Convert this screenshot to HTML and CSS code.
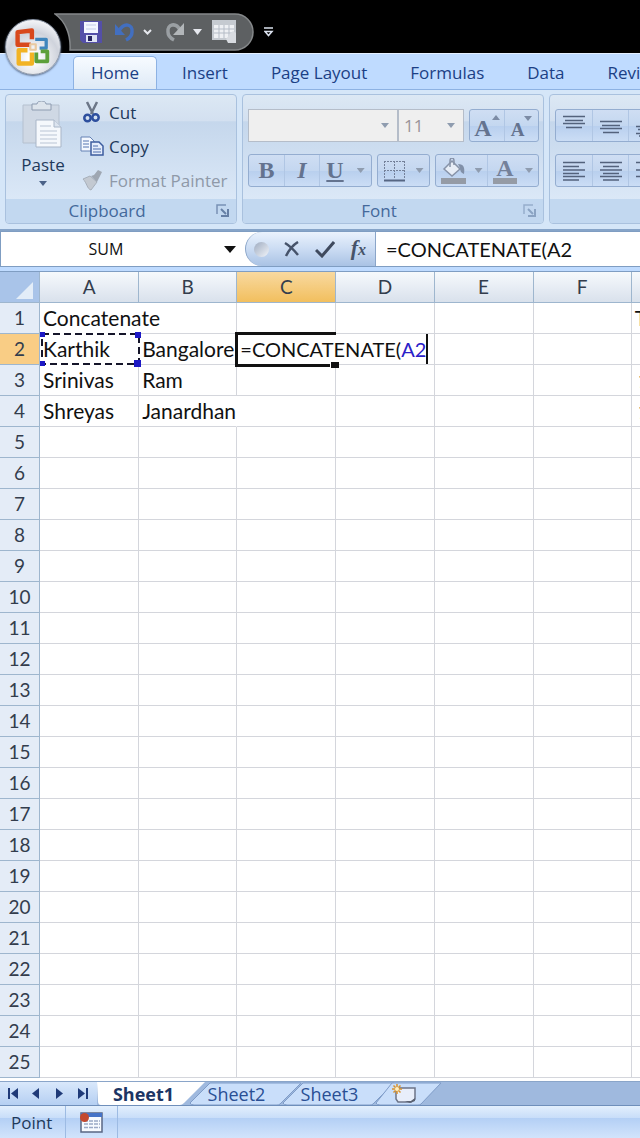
FILE: index.html
```
<!DOCTYPE html>
<html lang="en">
<head>
  <meta charset="UTF-8" />
  <meta name="viewport" content="width=device-width, initial-scale=1.0" />
  <title>Concatenate</title>
  <link rel="stylesheet" href="styles.css">
</head>
<body>
  <header class="title-bar">
    <button class="office-button" aria-label="Office Button">
      <svg width="44" height="44" viewBox="0 0 40 40" fill="none" stroke-width="4" stroke-linejoin="round">
        <path d="M18 18H6V6.500L19 5v8" stroke="#d8481c"/>
        <path d="M22 13h10v8h-6" stroke="#3f86bd" stroke-width="3"/>
        <path d="M15 23H7v12h12V25" stroke="#f2b324"/>
        <path d="M23 25v8h10v-9h-6" stroke="#5da03a" stroke-width="3.500"/>
        <path d="M17.500 17.500h5v5h-5z" stroke="#e9c9a0" stroke-width="2"/>
      </svg>
    </button>
    <div class="quick-access">
      <svg class="quick-shape" width="200" height="38" viewBox="0 0 200 38">
        <path d="M1 1H181a18 18 0 0 1 0 36H16C17 21 11 8 1 1z" fill="#5d6062" stroke="#85888a" stroke-width="1.500"/>
      </svg>
      <button aria-label="Save">
        <svg width="22" height="22" viewBox="0 0 22 22">
          <path d="M0 0h22v22H3l-3-3z" fill="#544fa8"/>
          <path d="M4 1h14v11H4z" fill="#f4f6ff"/>
          <path d="M6 4h10M6 8h10" stroke="#c4cbe8"/>
          <path d="M6 14h11v7H6z" fill="#dfe3f3"/>
          <path d="M8 15h4v5H8z" fill="#26245e"/>
        </svg>
      </button>
      <button class="undo" aria-label="Undo">
        <svg width="20" height="22" viewBox="0 0 20 22">
          <path d="M4 10C9 1 18 3 17 11c0 4-2 6-6 8" fill="none" stroke="#426fc0" stroke-width="3.500"/>
          <path d="M0 3v11h10z" fill="#426fc0"/>
        </svg>
      </button>
      <button aria-label="Undo list">
        <svg width="9" height="6" viewBox="0 0 9 6"><path d="M1 1l3.500 3.500L8 1" fill="none" stroke="#e6e8ee" stroke-width="2"/></svg>
      </button>
      <button class="redo" aria-label="Redo">
        <svg width="20" height="22" viewBox="0 0 20 22">
          <path d="M15 9C11 1 2 3 3 11c0 4 2 6 6 8" fill="none" stroke="#9a9fa3" stroke-width="3.500"/>
          <path d="M19 2v12H8z" fill="#b2b6b9"/>
        </svg>
      </button>
      <button aria-label="Redo list">
        <svg width="9" height="6" viewBox="0 0 9 6"><path d="M0 0h9L4.500 6z" fill="#e6e8ee"/></svg>
      </button>
      <button class="form-button" aria-label="Form">
        <svg width="25" height="24" viewBox="0 0 25 24">
          <path d="M0 0h24v20H0z" fill="#c5cad0"/>
          <path d="M2 5h20v13H2z" fill="#eef0f3"/>
          <path d="M2 9h20M2 13h20M7 5v13M12 5v13M17 5v13" stroke="#b5bcc6"/>
          <path d="M14 19l7-8 3 2v10h-8z" fill="#d8dbe0"/>
        </svg>
      </button>
      <button class="customize" aria-label="Customize Quick Access Toolbar">
        <svg width="10" height="10" viewBox="0 0 10 10"><path d="M0 1h9M1 4.500l3.500 4 3.500-4z" fill="none" stroke="#dce3f0" stroke-width="1.500"/></svg>
      </button>
    </div>
  </header>

  <nav class="tabs">
    <button class="tab active">Home</button>
    <button class="tab">Insert</button>
    <button class="tab">Page Layout</button>
    <button class="tab">Formulas</button>
    <button class="tab">Data</button>
    <button class="tab">Review</button>
  </nav>

  <section class="ribbon">
    <div class="group clipboard">
      <div class="group-body">
        <button class="paste">
          <svg width="42" height="48" viewBox="0 0 42 48">
            <path d="M1 4h36v38H1z" fill="#cfd8e4" stroke="#b5c0cf"/>
            <path d="M10 3h5c0-4 9-4 9 0h5v6H10z" fill="#dde4ec" stroke="#8d9bb0"/>
            <path d="M14 19h18l7 7v20H14z" fill="#f5f8fc" stroke="#a9b6c8"/>
            <path d="M32 19v7h7" fill="#dce4ef" stroke="#a9b6c8"/>
            <path d="M18 25h11M18 30h17M18 34h17M18 38h17M18 42h17" stroke="#b9c4d4"/>
          </svg>
          <span>Paste</span>
          <i class="arrow dark"></i>
        </button>
        <div class="clip-list">
          <button class="clip-item">
            <svg width="24" height="22" viewBox="0 0 24 22" fill="none">
              <path d="M7 1l6 12M17 1l-6 12" stroke="#6c7788" stroke-width="2.500"/>
              <circle cx="7.500" cy="17" r="3.200" stroke="#2d4f9e" stroke-width="2.500"/>
              <circle cx="15.500" cy="16.500" r="3.200" stroke="#2d4f9e" stroke-width="2.500"/>
            </svg>
            Cut
          </button>
          <button class="clip-item">
            <svg width="24" height="22" viewBox="0 0 24 22">
              <path d="M1 2h9l4 4v10H1z" fill="#f4f8ff" stroke="#6481b4"/>
              <path d="M3 6h6M3 9h6M3 12h6" stroke="#5474b0"/>
              <path d="M11 7h8l4 4v9H11z" fill="#e4ecfb" stroke="#3c5c9f" stroke-width="1.500"/>
              <path d="M13 11h5M13 14h8M13 17h8" stroke="#4d6dac"/>
            </svg>
            Copy
          </button>
          <button class="clip-item" disabled>
            <svg width="24" height="22" viewBox="0 0 24 22">
              <path d="M3 10l7-3 7 6-6 8C7 20 7 14 3 10z" fill="#c3c9d1" stroke="#a7afba"/>
              <path d="M11 7l3-1 4-5 4 2-3 6-2 4z" fill="#9fa7b2"/>
            </svg>
            Format Painter
          </button>
        </div>
      </div>
      <div class="group-title">
        Clipboard
        <button class="launcher" aria-label="Clipboard options">
          <svg width="13" height="13" viewBox="0 0 13 13" fill="none"><path d="M1 10V1h9" stroke="#7891b5" stroke-width="1.500"/><path d="M5 5l5 5M12 5v7H5" stroke="#6680a6" stroke-width="2"/></svg>
        </button>
      </div>
    </div>

    <div class="group font">
      <div class="group-body rows">
        <div class="tool-row">
          <div class="combos">
            <div class="combo font-name">
              <select aria-label="Font" disabled><option></option></select>
              <i class="arrow"></i>
            </div>
            <div class="combo font-size">
              <select aria-label="Font size" disabled><option>11</option></select>
              <i class="arrow"></i>
            </div>
          </div>
          <div class="tools">
            <button class="letter grow" aria-label="Grow font">A<svg width="8" height="5" viewBox="0 0 8 5"><path d="M0 5l4-5 4 5z" fill="#7c8ba5"/></svg></button>
            <button class="letter shrink" aria-label="Shrink font">A<svg width="8" height="5" viewBox="0 0 8 5"><path d="M0 0h8L4 5z" fill="#7c8ba5"/></svg></button>
          </div>
        </div>
        <div class="tool-row">
          <div class="tools">
            <button class="letter">B</button>
            <button class="letter italic">I</button>
            <button class="letter wide"><u>U</u><i class="arrow"></i></button>
          </div>
          <div class="tools">
            <button class="picker border-picker" aria-label="Borders">
              <svg width="21" height="22" viewBox="0 0 21 22" fill="none" stroke="#74819a">
                <path d="M0 1.500h21M0 10.500h21M.5 1v18M10.500 1v18M20.500 1v18" stroke-dasharray="2 1"/>
                <path d="M0 20.500h21" stroke="#566683" stroke-width="2"/>
              </svg>
              <i class="arrow"></i>
            </button>
          </div>
          <div class="tools">
            <button class="picker" aria-label="Fill color">
              <svg width="26" height="26" viewBox="0 0 26 26">
                <path d="M3 11l8-8 8 8-8 7z" fill="#e7edf6" stroke="#8793a8" stroke-width="1.500"/>
                <path d="M9 9V3c0-4 4-4 4 0v4" fill="none" stroke="#8793a8" stroke-width="1.500"/>
                <path d="M17 6c6 0 7 4 6 10-3-1-4-3-4-6z" fill="#8190a8"/>
                <path d="M0 20h25v6H0z" fill="#959ba5"/>
              </svg>
              <i class="arrow"></i>
            </button>
            <button class="picker" aria-label="Font color">
              <span class="font-color">A</span>
              <i class="arrow"></i>
            </button>
          </div>
        </div>
      </div>
      <div class="group-title">
        Font
        <button class="launcher faded" aria-label="Font options">
          <svg width="13" height="13" viewBox="0 0 13 13" fill="none"><path d="M1 10V1h9" stroke="#7891b5" stroke-width="1.500"/><path d="M5 5l5 5M12 5v7H5" stroke="#6680a6" stroke-width="2"/></svg>
        </button>
      </div>
    </div>

    <div class="group alignment">
      <div class="group-body rows">
        <div class="tool-row">
          <div class="tools">
            <button aria-label="Top align"><svg width="22" height="22" viewBox="0 0 22 22"><path d="M0 1.500h22M2 5.500h18M0 8.500h22M3 12.500h16" stroke="#53627c" stroke-width="1.500"/></svg></button>
            <button aria-label="Middle align"><svg width="22" height="22" viewBox="0 0 22 22"><path d="M0 6.500h22M2 10.500h18M0 13.500h22M3 17.500h16" stroke="#53627c" stroke-width="1.500"/></svg></button>
            <button aria-label="Bottom align"><svg width="22" height="22" viewBox="0 0 22 22"><path d="M0 11.500h22M2 14.500h18M0 18.500h22M3 21h16" stroke="#53627c" stroke-width="1.500"/></svg></button>
          </div>
        </div>
        <div class="tool-row">
          <div class="tools">
            <button aria-label="Align left"><svg width="22" height="20" viewBox="0 0 22 20"><path d="M0 1.500h22M0 5.500h16M0 9h22M0 12.500h16M0 15.500h22M0 19h16" stroke="#53627c" stroke-width="1.500"/></svg></button>
            <button aria-label="Center"><svg width="22" height="20" viewBox="0 0 22 20"><path d="M0 1.500h22M3 5.500h16M0 9h22M3 12.500h16M0 15.500h22M3 19h16" stroke="#53627c" stroke-width="1.500"/></svg></button>
            <button aria-label="Align right"><svg width="22" height="20" viewBox="0 0 22 20"><path d="M0 1.500h22M6 5.500h16M0 9h22M6 12.500h16M0 15.500h22M6 19h16" stroke="#53627c" stroke-width="1.500"/></svg></button>
          </div>
        </div>
      </div>
      <div class="group-title"></div>
    </div>
  </section>

  <div class="formula-bar">
    <div class="name-box">
      <input type="text" value="SUM" aria-label="Name box">
      <button aria-label="Show names"><svg width="12" height="7" viewBox="0 0 12 7"><path d="M0 0h12L6 7z" fill="#111"/></svg></button>
    </div>
    <div class="formula-buttons">
      <span class="knob"></span>
      <button aria-label="Cancel"><svg width="16" height="16" viewBox="0 0 16 16"><path d="M1 2c5 3 9 7 13 12M14 1C9 4 5 9 2 15" fill="none" stroke="#46536a" stroke-width="2.500"/></svg></button>
      <button aria-label="Enter"><svg width="20" height="17" viewBox="0 0 20 17"><path d="M1 9l6 6L19 1" fill="none" stroke="#3f4a5e" stroke-width="3"/></svg></button>
      <button class="fx" aria-label="Insert function">f<small>x</small></button>
    </div>
    <input class="formula" type="text" value="=CONCATENATE(A2" aria-label="Formula">
  </div>

  <main class="sheet">
    <table>
      <colgroup>
        <col class="c-head"><col class="c-wide"><col class="c-norm"><col class="c-wide"><col class="c-norm"><col class="c-wide"><col class="c-norm"><col class="c-wide">
      </colgroup>
      <thead>
        <tr>
          <th class="corner"><svg width="17" height="17" viewBox="0 0 17 17"><path d="M17 0v17H0z" fill="#e3edf8"/></svg></th>
          <th>A</th><th>B</th><th class="current">C</th><th>D</th><th>E</th><th>F</th><th></th>
        </tr>
      </thead>
      <tbody id="rows">
        <tr><th>1</th><td class="spill">Concatenate</td><td></td><td></td><td></td><td></td><td></td><td>Text</td></tr>
        <tr>
          <th class="current">2</th>
          <td class="source">Karthik
            <svg class="ants" width="101" height="36" viewBox="0 0 101 36" fill="none">
              <path d="M2 3h97v30H2z" stroke="#fff" stroke-width="3"/>
              <path d="M2 3h97v30H2z" stroke="#15152a" stroke-width="2" stroke-dasharray="7 4"/>
              <path d="M0 1h5v5H0zM95 1h6v6h-6zM0 30h5v5H0zM94 29h7v7h-7z" fill="#1c18c4"/>
            </svg>
          </td>
          <td>Bangalore</td>
          <td class="editing"><div class="editor">=CONCATENATE(<span>A2</span></div></td>
          <td></td><td></td><td></td><td></td>
        </tr>
        <tr><th>3</th><td>Srinivas</td><td>Ram</td><td></td><td></td><td></td><td></td><td class="number">1</td></tr>
        <tr><th>4</th><td>Shreyas</td><td class="spill">Janardhan</td><td></td><td></td><td></td><td></td><td class="number">1</td></tr>
      </tbody>
    </table>
  </main>

  <div class="sheet-bar">
    <div class="sheet-nav">
      <button aria-label="First sheet"><svg width="11" height="11" viewBox="0 0 11 11"><path d="M0 0h2v11H0zM10 0v11L3 5.500z" fill="#1f3a78"/></svg></button>
      <button aria-label="Previous sheet"><svg width="11" height="11" viewBox="0 0 11 11"><path d="M8 0v11L1 5.500z" fill="#1f3a78"/></svg></button>
      <button aria-label="Next sheet"><svg width="11" height="11" viewBox="0 0 11 11"><path d="M2 0v11l7-5.500z" fill="#1f3a78"/></svg></button>
      <button aria-label="Last sheet"><svg width="11" height="11" viewBox="0 0 11 11"><path d="M9 0h2v11H9zM1 0v11l7-5.500z" fill="#1f3a78"/></svg></button>
    </div>
    <button class="sheet-tab active">
      <svg width="108" height="24" viewBox="0 0 108 24"><path d="M0 0h108L87 21q-2 2-4 2H4q-3 0-3-4z" fill="#fff"/></svg>
      <span>Sheet1</span>
    </button>
    <button class="sheet-tab">
      <svg width="111" height="24" viewBox="0 0 111 24"><path d="M0 21L20 1h91L90 22q-1 1-3 1H4q-3 0-4-2z" fill="#c9defa" stroke="#7f9cc8"/></svg>
      <span>Sheet2</span>
    </button>
    <button class="sheet-tab">
      <svg width="111" height="24" viewBox="0 0 111 24"><path d="M0 21L20 1h91L90 22q-1 1-3 1H4q-3 0-4-2z" fill="#c9defa" stroke="#7f9cc8"/></svg>
      <span>Sheet3</span>
    </button>
    <button class="sheet-tab new-sheet" aria-label="Insert worksheet">
      <svg width="66" height="24" viewBox="0 0 66 24">
        <path d="M0 21L16 1h49L45 22q-1 1-3 1H4q-3 0-4-2z" fill="#c9defa" stroke="#7f9cc8"/>
        <path d="M20 6h19v11l-4 3H22l-2-3z" fill="#e8eefa" stroke="#6c7488" stroke-width="1.500"/>
        <path d="M29 19h6l4-3v3l-5 2z" fill="#5b6272"/>
        <path d="M21 2v10M16 7h10M17.500 3.500l7 7M24.500 3.500l-7 7" stroke="#d9932c" stroke-width="1.500"/>
        <circle cx="21" cy="7" r="2" fill="#fff0c0"/>
      </svg>
    </button>
  </div>

  <footer class="status-bar">
    <span class="mode">Point</span>
    <button class="macro" aria-label="Record macro">
      <svg width="24" height="21" viewBox="0 0 24 21">
        <path d="M2 1h21v19H2z" fill="#f7faff" stroke="#5a6784" stroke-width="1.500"/>
        <path d="M2 1h21v4H2z" fill="#4573c8"/>
        <path d="M5 9h16M5 12h16M5 15.500h16" stroke="#9aa9c6" stroke-width="1.500" stroke-dasharray="4 1"/>
        <circle cx="5.500" cy="5.500" r="4.500" fill="#c4492f"/>
      </svg>
    </button>
  </footer>

  <script>
    const rows = document.getElementById("rows");

    for (let i = 5; i <= 25; i++) {
      const row = document.createElement("tr");
      row.innerHTML = `<th>${i}</th>` + "<td></td>".repeat(7);
      rows.appendChild(row);
    }
  </script>
</body>
</html>
```

FILE: styles.css
```
*, *::before, *::after {
  box-sizing: border-box;
}

body {
  margin: 0;
  background-color: #bfdbff;
  font-family: "Open Sans", "Noto Sans", sans-serif;
  font-size: 17px;
  color: #1e395b;
  overflow-x: hidden;
}

button {
  padding: 0;
  border: none;
  background: none;
  font: inherit;
  color: inherit;
}

button svg {
  display: block;
  flex: none;
}

input, select {
  border: none;
  outline: none;
  margin: 0;
  border-radius: 0;
}

/* title bar */
.title-bar {
  position: relative;
  height: 53px;
  background-color: #000;
}

.office-button {
  position: absolute;
  z-index: 2;
  left: 5px;
  top: 19px;
  width: 56px;
  height: 56px;
  display: flex;
  align-items: center;
  justify-content: center;
  border-radius: 50%;
  border: 1px solid #8b95a5;
  background: radial-gradient(circle at 50% 70%, #fff 10%, #cfd3dc 55%, #f3f4f7 80%, #a3aab6 100%);
  box-shadow: 0 1px 2px #5b6e8c;
}

.quick-access {
  position: relative;
  display: flex;
  align-items: center;
  height: 53px;
  padding: 11px 0 0 80px;
  gap: 10px;
}

.quick-access button {
  position: relative;
}

.quick-shape {
  position: absolute;
  left: 54px;
  top: 13px;
}

.quick-access .undo, .quick-access .redo {
  margin-left: 3px;
  margin-right: -2px;
}

.quick-access .customize {
  margin-left: 17px;
}

/* ribbon tabs */
.tabs {
  display: flex;
  gap: 7px;
  height: 37px;
  padding: 2px 0 0 73px;
  border-top: 1px solid #e5f0ff;
  border-bottom: 1px solid #8db2e3;
  background-color: #bfdbff;
  color: #1b3f85;
  overflow: hidden;
}

.tab {
  flex: none;
  height: 34px;
  padding: 0 17px 2px;
  border: 1px solid transparent;
  border-radius: 5px 5px 0 0;
  white-space: nowrap;
}

.tab.active {
  background: linear-gradient(#f7fbff, #dde9f6);
  border-color: #8db2e3;
  border-bottom: none;
}

/* ribbon */
.ribbon {
  display: flex;
  gap: 5px;
  height: 141px;
  padding: 4px 5px 5px;
  overflow: hidden;
  background-color: #d5e6f8;
  border-bottom: 2px solid #86a4c8;
}

.group {
  display: flex;
  flex: none;
  flex-direction: column;
  border: 1px solid #a9c1de;
  border-radius: 4px;
  background: linear-gradient(#dce8f4, #d3e0f0 20%, #c5d7ec 21%, #dbe8f7 82%);
  overflow: hidden;
}

.clipboard {
  width: 232px;
}

.font {
  width: 302px;
}

.alignment {
  width: 280px;
}

.group-body {
  display: flex;
  flex: 1;
}

.group-title {
  position: relative;
  height: 24px;
  line-height: 24px;
  padding-right: 28px;
  text-align: center;
  color: #44699b;
  background-color: #c2d8f0;
}

.launcher {
  position: absolute;
  right: 7px;
  top: 5px;
}

.faded {
  opacity: 0.6;
}

.arrow {
  flex: none;
  width: 8px;
  height: 5px;
  background-color: #8f9caf;
  clip-path: polygon(0 0, 100% 0, 50% 100%);
}

.arrow.dark {
  background-color: #4b6288;
}

.paste {
  display: flex;
  flex-direction: column;
  align-items: center;
  width: 74px;
  padding-top: 6px;
}

.paste span {
  line-height: 32px;
}

.clip-list {
  display: flex;
  flex-direction: column;
}

.clip-item {
  display: flex;
  align-items: center;
  gap: 5px;
  height: 34px;
  white-space: nowrap;
}

.clip-item:disabled {
  color: #8f99a8;
}

.rows {
  flex-direction: column;
  gap: 12px;
  padding: 14px 5px 0;
}

.tool-row {
  display: flex;
  gap: 5px;
}

.combos {
  display: flex;
}

.combo {
  display: flex;
  align-items: center;
  height: 33px;
  padding-right: 8px;
  border: 1px solid #b5bdc9;
  background-color: #efefef;
}

.combo select {
  flex: 1;
  min-width: 0;
  padding-left: 5px;
  appearance: none;
  background: none;
  font: inherit;
  color: #9a9499;
  opacity: 1;
}

.font-name {
  width: 150px;
}

.font-size {
  width: 66px;
}

.tools {
  display: flex;
  height: 33px;
  border: 1px solid #94add0;
  border-radius: 3px;
  background: linear-gradient(#cfdef3, #c4d7f0 50%, #b8cfee 51%, #cbddf5);
}

.tools button {
  display: flex;
  align-items: center;
  justify-content: center;
  width: 35px;
}

.tools button + button {
  border-left: 1px solid #b0c6e4;
}

.tools .letter {
  font-family: "Liberation Serif", serif;
  font-size: 24px;
  font-weight: bold;
  color: #64738f;
}

.tools .grow, .tools .shrink {
  align-items: flex-start;
  width: 34px;
}

.tools .grow {
  padding-top: 5px;
  line-height: 27px;
}

.tools .shrink {
  padding-top: 6px;
  font-size: 19px;
  line-height: 27px;
}

.tools .italic {
  font-style: italic;
}

.tools .wide {
  width: 52px;
  gap: 13px;
}

.tools .picker {
  width: 51px;
  gap: 8px;
}

.tools .border-picker {
  gap: 11px;
}

.font-color {
  width: 24px;
  height: 26px;
  border-bottom: 6px solid #959ba5;
  font: bold 24px/20px "Liberation Serif", serif;
  color: #74819a;
}

.alignment .tools button {
  width: 36px;
}

/* formula bar */
.formula-bar {
  display: flex;
  height: 36px;
  border: solid #7f9dc2;
  border-width: 1px 0 1px 1px;
  background-color: #fff;
}

.name-box {
  display: flex;
  flex: none;
  width: 244px;
}

.name-box input {
  width: 210px;
  text-align: center;
  font-family: "Open Sans", sans-serif;
  font-size: 16px;
  color: #111;
}

.name-box button {
  padding-left: 13px;
}

.formula-buttons {
  display: flex;
  flex: none;
  align-items: center;
  justify-content: space-between;
  width: 131px;
  padding: 0 9px 0 8px;
  border: 1px solid #8aa5c9;
  border-width: 0 1px;
  border-radius: 17px 0 0 17px;
  background: linear-gradient(#eaf2fd, #cbdcf3 50%, #a9c2e4);
}

.knob {
  width: 15px;
  height: 15px;
  border-radius: 50%;
  background: linear-gradient(135deg, #9eabc0, #f2f5fa);
}

.fx {
  font: italic bold 22px/24px "Liberation Serif", serif;
  color: #46536a;
}

.fx small {
  font-size: 16px;
}

.formula {
  flex: 1;
  min-width: 0;
  padding: 0 10px;
  font-family: Lato, "Liberation Sans", sans-serif;
  font-size: 20px;
  color: #111;
}

/* sheet */
.sheet {
  overflow: hidden;
  margin-top: 4px;
  padding-bottom: 3px;
  background-color: #fff;
  border-top: 1px solid #7f9dc2;
  font-family: Lato, "Liberation Sans", sans-serif;
}

.sheet table {
  width: 731px;
  table-layout: fixed;
  border-collapse: separate;
  border-spacing: 0;
}

.c-head {
  width: 40px;
}

.c-wide {
  width: 99px;
}

.c-norm {
  width: 98px;
}

.sheet th, .sheet td {
  height: 31px;
  padding: 0;
  line-height: 30px;
  white-space: nowrap;
}

.sheet th {
  font-size: 19px;
  font-weight: normal;
  color: #333d4d;
  border-right: 1px solid #9eb6ce;
  border-bottom: 1px solid #9eb6ce;
  background-color: #e4ecf7;
}

.sheet thead th {
  height: 31px;
  background: linear-gradient(#f6f9fc, #d9e1ec);
}

.sheet thead .corner {
  padding: 7px 6px 0 0;
  text-align: right;
  line-height: 0;
  background: #a9c4e9;
}

.sheet thead .current {
  background: linear-gradient(#f8d9a0, #f2bf5e);
}

.sheet tbody .current {
  background-color: #f9cd85;
}

.sheet td {
  padding-left: 3px;
  font-size: 21px;
  border-right: 1px solid #d4d6dc;
  border-bottom: 1px solid #d4d6dc;
  color: #111;
}

.sheet .spill {
  border-right-color: transparent;
}

.sheet .number {
  padding-left: 6px;
}

.source, .editing {
  position: relative;
}

.ants {
  position: absolute;
  left: 0;
  top: -3px;
}

.editor {
  position: absolute;
  z-index: 1;
  left: -1px;
  top: 0;
  height: 30px;
  padding-left: 4px;
  font-size: 20px;
  border-right: 2px solid #111;
  background-color: #fff;
}

.editor span {
  color: #2a20c8;
}

/* thick frame round the active cell */
.editing::before {
  content: "";
  position: absolute;
  z-index: 2;
  left: -2px;
  top: -2px;
  width: 101px;
  height: 35px;
  border: 3px solid #111;
  border-right: none;
}

.editing::after {
  content: "";
  position: absolute;
  z-index: 3;
  right: -4px;
  bottom: -4px;
  width: 9px;
  height: 7px;
  border: solid #fff;
  border-width: 1px 0 0 1px;
  background-color: #111;
}

/* sheet tabs */
.sheet-bar {
  display: flex;
  height: 25px;
  border-top: 1px solid #8aa5c9;
  border-bottom: 1px solid #6f8fbb;
  background-color: #9fb9de;
  overflow: hidden;
}

.sheet-nav {
  display: flex;
  flex: none;
  align-items: center;
  width: 97px;
  padding-left: 8px;
  gap: 12px;
  background: linear-gradient(#d9e8fb, #b5cff2);
}

.sheet-tab {
  position: relative;
  flex: none;
  width: 93px;
  height: 24px;
  font-size: 18px;
  line-height: 24px;
  color: #2a4f94;
}

.sheet-tab svg {
  position: absolute;
  left: 0;
  top: 0;
}

.sheet-tab span {
  position: relative;
}

.sheet-tab.active {
  font-weight: bold;
  color: #1c3564;
}

/* status bar */
.status-bar {
  display: flex;
  align-items: center;
  height: 33px;
  background: linear-gradient(#e3effd, #c9def9 35%, #b3cff5 36%, #d3e5fc);
}

.mode {
  width: 66px;
  padding-left: 11px;
  line-height: 33px;
  border-right: 1px solid #9dbbe3;
}

.macro {
  display: flex;
  align-items: center;
  width: 52px;
  height: 33px;
  padding-left: 13px;
  border-right: 1px solid #9dbbe3;
}
```
